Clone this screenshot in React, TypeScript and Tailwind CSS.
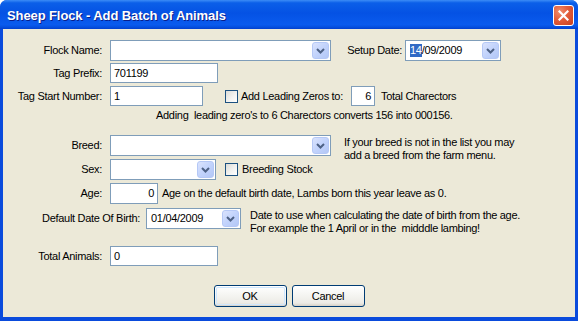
import React from "react";

const font = "font-['Liberation_Sans',Arial,sans-serif]";

function Arrow() {
  return (
    <div className="w-[17px] h-full rounded-[3px] border border-[#B5C8F6] bg-[linear-gradient(135deg,#DAE3FD_0%,#C2D3FC_50%,#B3C7F6_100%)] flex items-center justify-center">
      <svg width="9" height="6" viewBox="0 0 9 6">
        <path d="M1 1 L4.5 4.5 L8 1" fill="none" stroke="#4D6185" strokeWidth="2" />
      </svg>
    </div>
  );
}

function Combo({ w, h = 21, children }: { w: number; h?: number; children?: React.ReactNode }) {
  return (
    <div
      className="border border-[#7F9DB9] bg-white flex items-stretch p-[1px] shrink-0"
      style={{ width: w, height: h }}
    >
      <div className="flex-1 flex items-center pl-[2px] overflow-hidden whitespace-nowrap">{children}</div>
      <Arrow />
    </div>
  );
}

function TextBox({ w, h = 20, value, right }: { w: number; h?: number; value?: string; right?: boolean }) {
  return (
    <div
      className={`border border-[#7F9DB9] bg-white flex items-center px-[3px] shrink-0 ${right ? "justify-end" : ""}`}
      style={{ width: w, height: h }}
    >
      {value}
    </div>
  );
}

function Check() {
  return (
    <div className="w-[13px] h-[13px] border border-[#1C5180] bg-[linear-gradient(135deg,#DCDCD7_0%,#F4F4F2_60%,#FFFFFF_100%)] shrink-0" />
  );
}

function Label({ w = 99, children }: { w?: number; children: React.ReactNode }) {
  return (
    <div className="text-right shrink-0 whitespace-nowrap" style={{ width: w }}>
      {children}
    </div>
  );
}

function Button({ children, def }: { children: React.ReactNode; def?: boolean }) {
  return (
    <div className="w-[73px] h-[22px] rounded-[3px] border border-[#003C74] bg-[linear-gradient(to_bottom,#FFFFFF_0%,#F6F6F3_40%,#ECEBE6_85%,#D6D0C5_100%)] flex items-center justify-center p-[1px]">
      <div
        className={`w-full h-full rounded-[2px] flex items-center justify-center ${def ? "shadow-[inset_0_0_0_1px_#CEE7FF]" : ""}`}
      >
        {children}
      </div>
    </div>
  );
}

export default function App() {
  return (
    <div className={`w-[578px] h-[321px] ${font} text-[11px] text-black leading-[13px] flex flex-col bg-[#0A4BDC] rounded-t-[7px] overflow-hidden`}>
      <div className="h-[29px] shrink-0 flex items-center justify-between pl-[7px] pr-[4px] bg-[linear-gradient(to_bottom,#3C8CF6_0%,#0B5FE8_10%,#0552E4_45%,#0A5BEE_85%,#0650E0_93%,#0340CE_100%)]">
        <div className="text-white font-bold text-[13px] tracking-[-0.1px] [text-shadow:1px_1px_#0A1E8A] mt-[2px]">
          Sheep Flock - Add Batch of Animals
        </div>
        <div className="w-[21px] h-[21px] rounded-[3px] border border-white bg-[radial-gradient(circle_at_30%_30%,#F08E6E_0%,#E35D3B_45%,#C8401F_100%)] flex items-center justify-center mt-[2px]">
          <svg width="11" height="11" viewBox="0 0 11 11">
            <path d="M1.5 1.5 L9.5 9.5 M9.5 1.5 L1.5 9.5" stroke="white" strokeWidth="2.2" strokeLinecap="square" />
          </svg>
        </div>
      </div>
      <div className="flex-1 mx-[3px] mb-[4px] bg-[#ECE9D8] flex flex-col tracking-[-0.3px]">
        {/* Row 1 */}
        <div className="flex items-center h-[21px] mt-[11px]">
          <Label>Flock Name:</Label>
          <div className="ml-[8px]">
            <Combo w={221} />
          </div>
          <div className="w-[71px] text-right whitespace-nowrap">Setup Date:</div>
          <div className="ml-[3px]">
            <Combo w={96}>
              <span className="ml-[1px] bg-[#316AC5] text-white">14</span>
              <span>/09/2009</span>
            </Combo>
          </div>
        </div>
        {/* Row 2 */}
        <div className="flex items-center h-[20px] mt-[2px]">
          <Label>Tag Prefix:</Label>
          <div className="ml-[8px]">
            <TextBox w={108} value="701199" />
          </div>
        </div>
        {/* Row 3 */}
        <div className="flex items-center h-[20px] mt-[3px]">
          <Label>Tag Start Number:</Label>
          <div className="ml-[8px]">
            <TextBox w={93} value="1" />
          </div>
          <div className="ml-[22px] w-[126px] flex items-center">
            <Check />
            <span className="ml-[3px] whitespace-nowrap">Add Leading Zeros to:</span>
          </div>
          <TextBox w={24} value="6" right />
          <span className="ml-[6px] whitespace-nowrap">Total Charectors</span>
        </div>
        {/* Row 4 */}
        <div className="mt-[2px] h-[14px] pl-[153px] flex items-center whitespace-nowrap">
          Adding&nbsp; leading zero's to 6 Charectors converts 156 into 000156.
        </div>
        {/* Row 5 */}
        <div className="flex items-center h-[21px] mt-[13px]">
          <Label>Breed:</Label>
          <div className="ml-[8px]">
            <Combo w={221} />
          </div>
          <div className="ml-[13px] h-[21px] relative w-[220px]">
            <div className="absolute top-[1px] left-0 whitespace-nowrap">
              If your breed is not in the list you may
              <br />
              add a breed from the farm menu.
            </div>
          </div>
        </div>
        {/* Row 6 */}
        <div className="flex items-center h-[21px] mt-[3px]">
          <Label>Sex:</Label>
          <div className="ml-[8px]">
            <Combo w={106} />
          </div>
          <div className="ml-[9px]">
            <Check />
          </div>
          <span className="ml-[4px] whitespace-nowrap">Breeding Stock</span>
        </div>
        {/* Row 7 */}
        <div className="flex items-center h-[21px] mt-[3px]">
          <Label>Age:</Label>
          <div className="ml-[8px]">
            <TextBox w={48} h={21} value="0" right />
          </div>
          <span className="ml-[4px] whitespace-nowrap">
            Age on the default birth date, Lambs born this year leave as 0.
          </span>
        </div>
        {/* Row 8 */}
        <div className="flex items-center h-[21px] mt-[4px]">
          <Label w={137}>Default Date Of Birth:</Label>
          <div className="ml-[6px]">
            <Combo w={95}>
              <span className="ml-[1px]">01/04/2009</span>
            </Combo>
          </div>
          <div className="ml-[9px] h-[21px] relative w-[300px]">
            <div className="absolute top-[1px] left-0 whitespace-nowrap">
              Date to use when calculating the date of birth from the age.
              <br />
              For example the 1 April or in the&nbsp; midddle lambing!
            </div>
          </div>
        </div>
        {/* Row 9 */}
        <div className="flex items-center h-[20px] mt-[17px]">
          <Label>Total Animals:</Label>
          <div className="ml-[8px]">
            <TextBox w={108} value="0" />
          </div>
        </div>
        {/* Buttons */}
        <div className="flex justify-center gap-[5px] mt-[19px]">
          <Button def>OK</Button>
          <Button>Cancel</Button>
        </div>
      </div>
    </div>
  );
}
